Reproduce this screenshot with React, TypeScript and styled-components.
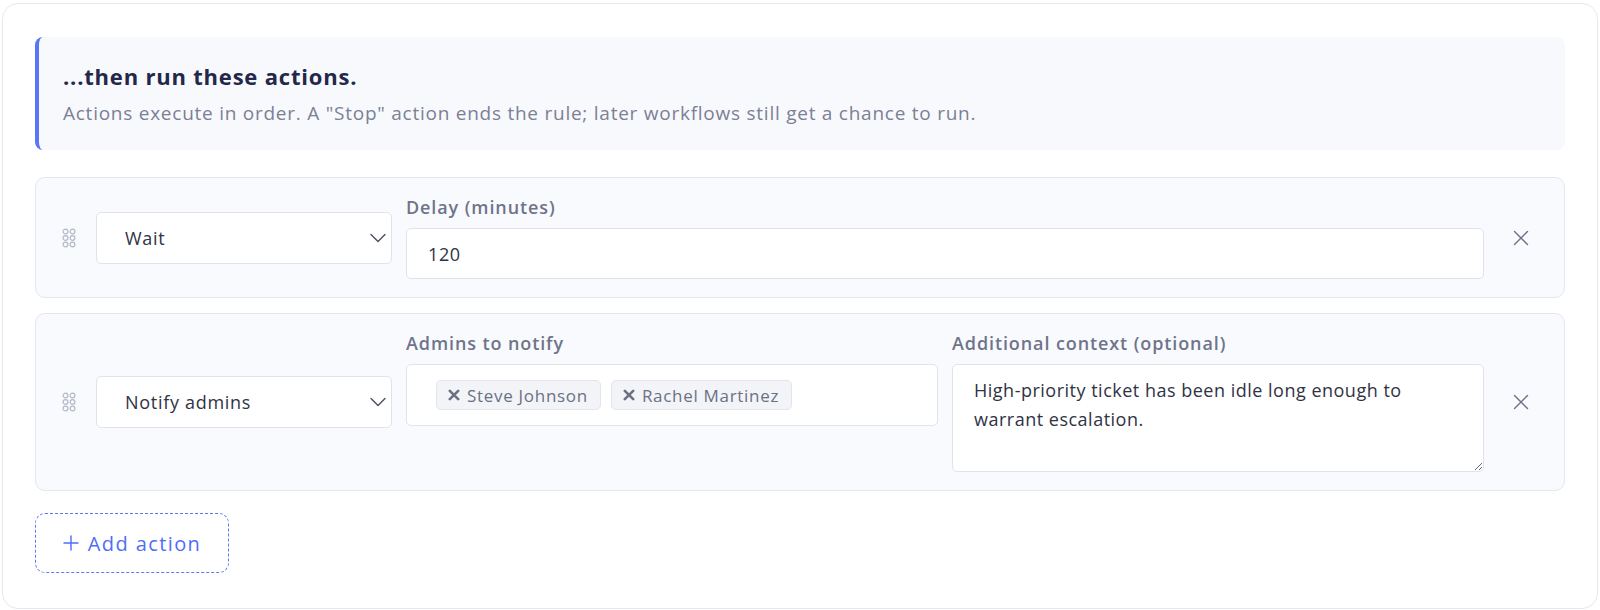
import React from "react";
import styled, { createGlobalStyle } from "styled-components";

const GlobalStyle = createGlobalStyle`
  * { box-sizing: border-box; }
  html, body { margin: 0; padding: 0; background: #ffffff; }
  body {
    font-family: "Open Sans", "Liberation Sans", sans-serif;
    color: #2f3344;
    -webkit-font-smoothing: antialiased;
  }
`;

const Page = styled.div`
  padding: 3px 2px 1px 2px;
`;

const Card = styled.section`
  border: 1px solid #e6e8f0;
  border-radius: 16px;
  background: #ffffff;
  padding: 33px 32px 35px 32px;
  display: flex;
  flex-direction: column;
`;

const Callout = styled.div`
  background: #f8f9fd;
  border-left: 4px solid #5876f6;
  border-radius: 8px;
  padding: 25px 28px 24px 24px;
  margin-bottom: 27px;
`;

const Title = styled.h3`
  margin: 0 0 9px 0;
  font-size: 22px;
  line-height: 29px;
  font-weight: 700;
  color: #23284a;
  letter-spacing: 0.8px;
`;

const Subtitle = styled.p`
  margin: 0;
  font-size: 19px;
  line-height: 26px;
  font-weight: 400;
  color: #7b8095;
  letter-spacing: 0.75px;
`;

const ActionList = styled.div`
  display: flex;
  flex-direction: column;
  gap: 15px;
`;

const ActionRow = styled.div`
  display: flex;
  align-items: center;
  gap: 14px;
  background: #f9fafe;
  border: 1px solid #e4e6f0;
  border-radius: 10px;
  padding: 18px 20px 18px 21px;
`;

const Handle = styled.div`
  width: 24px;
  margin-right: 1px;
  display: flex;
  justify-content: center;
  align-items: center;
  flex: none;
  cursor: grab;
`;

const SelectWrap = styled.div`
  position: relative;
  width: 296px;
  flex: none;
`;

const Select = styled.select`
  appearance: none;
  -webkit-appearance: none;
  width: 100%;
  height: 52px;
  border: 1px solid #e1e3ec;
  border-radius: 5px;
  background: #ffffff;
  font-family: inherit;
  font-size: 18px;
  letter-spacing: 0.7px;
  color: #2f3344;
  padding: 0 40px 0 28px;
  outline: none;
`;

const Chevron = styled.svg`
  position: absolute;
  right: 6px;
  top: 50%;
  transform: translateY(-50%);
  pointer-events: none;
`;

const Fields = styled.div<{ $cols: number }>`
  flex: 1;
  display: grid;
  grid-template-columns: repeat(${(p) => p.$cols}, 1fr);
  gap: 14px;
  align-items: start;
`;

const Field = styled.label`
  display: flex;
  flex-direction: column;
  min-width: 0;
`;

const Label = styled.span`
  font-size: 18px;
  line-height: 22px;
  font-weight: 600;
  color: #6f748a;
  letter-spacing: 0.9px;
  margin-bottom: 10px;
`;

const TextInput = styled.input`
  height: 51px;
  border: 1px solid #e1e3ec;
  border-radius: 5px;
  background: #ffffff;
  font-family: inherit;
  font-size: 18px;
  letter-spacing: 0.6px;
  color: #2f3344;
  padding: 0 21px;
  outline: none;
`;

const MultiBox = styled.div`
  height: 62px;
  border: 1px solid #e1e3ec;
  border-radius: 5px;
  background: #ffffff;
  display: flex;
  align-items: center;
  gap: 10px;
  padding: 0 29px;
`;

const Chip = styled.span`
  display: inline-flex;
  align-items: center;
  gap: 7px;
  height: 30px;
  padding: 0 12px 0 11px;
  background: #f3f4f8;
  border: 1px solid #e3e5ee;
  border-radius: 5px;
  font-size: 17px;
  letter-spacing: 0.7px;
  color: #6b7085;
  white-space: nowrap;
`;

const TextArea = styled.textarea`
  height: 108px;
  border: 1px solid #e1e3ec;
  border-radius: 5px;
  background: #ffffff;
  font-family: inherit;
  font-size: 18px;
  letter-spacing: 0.5px;
  line-height: 29px;
  color: #2f3344;
  padding: 11px 21px;
  outline: none;
  resize: vertical;
`;

const RemoveButton = styled.button`
  width: 32px;
  height: 32px;
  margin: 0 7px;
  flex: none;
  border: none;
  background: transparent;
  display: flex;
  align-items: center;
  justify-content: center;
  padding: 0;
  cursor: pointer;
`;

const AddButton = styled.button`
  align-self: flex-start;
  margin-top: 22px;
  width: 194px;
  height: 60px;
  border: 1.5px dashed #5b7bf5;
  border-radius: 10px;
  background: #ffffff;
  color: #4f6ef7;
  font-family: inherit;
  font-size: 20px;
  letter-spacing: 1.4px;
  font-weight: 500;
  display: flex;
  align-items: center;
  justify-content: center;
  gap: 9px;
  padding: 0;
  cursor: pointer;
`;

const DragDots = () => (
  <svg width="14" height="20" viewBox="0 0 14 20" fill="none" stroke="#b4b8c8" strokeWidth="1.2">
    {[3.5, 10, 16.5].map((cy) =>
      [3.5, 10.5].map((cx) => <circle key={`${cx}-${cy}`} cx={cx} cy={cy} r="2.4" />)
    )}
  </svg>
);

const XIcon = () => (
  <svg width="16" height="16" viewBox="0 0 16 16" fill="none" stroke="#6b7085" strokeWidth="1.4" strokeLinecap="round">
    <path d="M1.5 1.5 L14.5 14.5 M14.5 1.5 L1.5 14.5" />
  </svg>
);

const ChipX = () => (
  <svg width="12" height="12" viewBox="0 0 12 12" fill="none" stroke="#6b7085" strokeWidth="2.6" strokeLinecap="round">
    <path d="M1.8 1.8 L10.2 10.2 M10.2 1.8 L1.8 10.2" />
  </svg>
);

const ActionSelect = ({ value }: { value: string }) => (
  <SelectWrap>
    <Select defaultValue={value}>
      <option>Wait</option>
      <option>Notify admins</option>
      <option>Stop</option>
    </Select>
    <Chevron width="16" height="16" viewBox="0 0 16 16" fill="none" stroke="#4a4f63" strokeWidth="1.4" strokeLinecap="round" strokeLinejoin="round">
      <path d="M1 4.5 L8 11.5 L15 4.5" />
    </Chevron>
  </SelectWrap>
);

export default function App() {
  return (
    <>
      <GlobalStyle />
      <Page>
        <Card>
          <Callout>
            <Title>...then run these actions.</Title>
            <Subtitle>
              Actions execute in order. A "Stop" action ends the rule; later workflows still get a chance to run.
            </Subtitle>
          </Callout>

          <ActionList>
            <ActionRow>
              <Handle><DragDots /></Handle>
              <ActionSelect value="Wait" />
              <Fields $cols={1}>
                <Field>
                  <Label>Delay (minutes)</Label>
                  <TextInput defaultValue="120" />
                </Field>
              </Fields>
              <RemoveButton aria-label="Remove action"><XIcon /></RemoveButton>
            </ActionRow>

            <ActionRow>
              <Handle><DragDots /></Handle>
              <ActionSelect value="Notify admins" />
              <Fields $cols={2}>
                <Field as="div">
                  <Label>Admins to notify</Label>
                  <MultiBox>
                    <Chip><ChipX />Steve Johnson</Chip>
                    <Chip><ChipX />Rachel Martinez</Chip>
                  </MultiBox>
                </Field>
                <Field>
                  <Label>Additional context (optional)</Label>
                  <TextArea defaultValue="High-priority ticket has been idle long enough to warrant escalation." />
                </Field>
              </Fields>
              <RemoveButton aria-label="Remove action"><XIcon /></RemoveButton>
            </ActionRow>
          </ActionList>

          <AddButton>
            <svg width="16" height="16" viewBox="0 0 16 16" fill="none" stroke="#4f6ef7" strokeWidth="1.4" strokeLinecap="round">
              <path d="M8 1 V15 M1 8 H15" />
            </svg>
            Add action
          </AddButton>
        </Card>
      </Page>
    </>
  );
}
